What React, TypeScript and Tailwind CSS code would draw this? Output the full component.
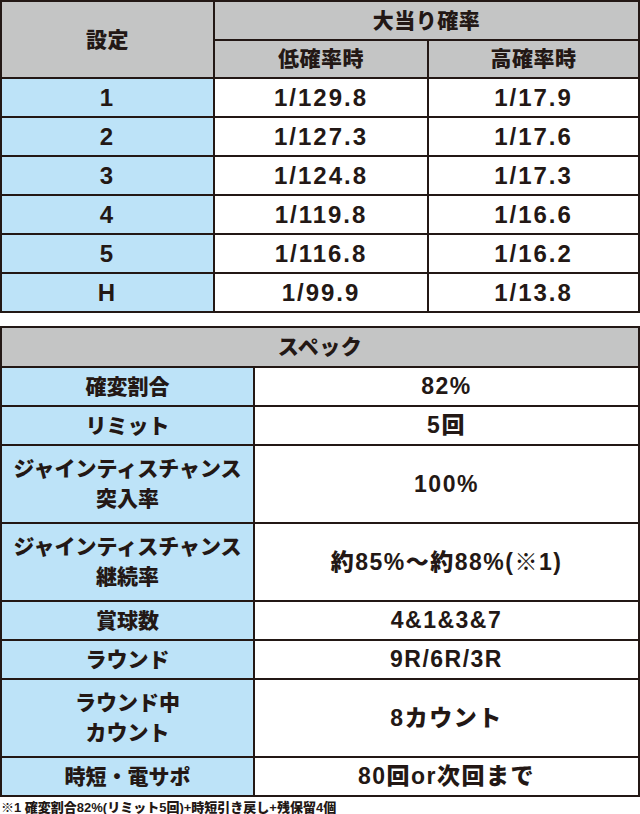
import React from "react";

const font = { fontFamily: '"Liberation Sans", "Noto Sans CJK JP", sans-serif' };

const probRows = [
  { setting: "1", low: "1/129.8", high: "1/17.9" },
  { setting: "2", low: "1/127.3", high: "1/17.6" },
  { setting: "3", low: "1/124.8", high: "1/17.3" },
  { setting: "4", low: "1/119.8", high: "1/16.6" },
  { setting: "5", low: "1/116.8", high: "1/16.2" },
  { setting: "H", low: "1/99.9", high: "1/13.8" },
];

const specRows: { label: string[]; value: string; tall?: boolean }[] = [
  { label: ["確変割合"], value: "82%" },
  { label: ["リミット"], value: "5回" },
  { label: ["ジャインティスチャンス", "突入率"], value: "100%", tall: true },
  { label: ["ジャインティスチャンス", "継続率"], value: "約85%～約88%(※1)", tall: true },
  { label: ["賞球数"], value: "4&1&3&7" },
  { label: ["ラウンド"], value: "9R/6R/3R" },
  { label: ["ラウンド中", "カウント"], value: "8カウント", tall: true },
  { label: ["時短・電サポ"], value: "80回or次回まで" },
];

const cell = "border-2 border-[#231815] text-center align-middle font-black text-[#231815]";
const head = `${cell} bg-[#c4c5c5] text-[21px] tracking-[0.5px]`;
const num = "text-[24px] tracking-[2px]";

export default function App() {
  return (
    <div className="w-[640px] bg-white" style={font}>
      <table className="w-full border-collapse table-fixed">
        <colgroup>
          <col className="w-[213px]" />
          <col className="w-[214px]" />
          <col />
        </colgroup>
        <thead>
          <tr className="h-[39px]">
            <th rowSpan={2} className={head}>
              設定
            </th>
            <th colSpan={2} className={head}>
              大当り確率
            </th>
          </tr>
          <tr className="h-[38px]">
            <th className={head}>低確率時</th>
            <th className={head}>高確率時</th>
          </tr>
        </thead>
        <tbody>
          {probRows.map((r) => (
            <tr key={r.setting} className="h-[39px]">
              <td className={`${cell} bg-[#bde3f8] ${num}`}>{r.setting}</td>
              <td className={`${cell} ${num}`}>{r.low}</td>
              <td className={`${cell} ${num}`}>{r.high}</td>
            </tr>
          ))}
        </tbody>
      </table>

      <table className="mt-[13px] w-full border-collapse table-fixed">
        <colgroup>
          <col className="w-[253px]" />
          <col />
        </colgroup>
        <thead>
          <tr className="h-[40px]">
            <th colSpan={2} className={head}>
              スペック
            </th>
          </tr>
        </thead>
        <tbody>
          {specRows.map((r, i) => (
            <tr key={i} className={r.tall ? "h-[78px]" : "h-[39px]"}>
              <td className={`${cell} bg-[#bde3f8] text-[21px] leading-[30px]`}>
                {r.label.map((l) => (
                  <div key={l}>{l}</div>
                ))}
              </td>
              <td className={`${cell} text-[23px] tracking-[1.5px]`}>{r.value}</td>
            </tr>
          ))}
        </tbody>
      </table>

      <p className="mt-[2px] text-[13px] font-black text-[#231815] leading-[18px] pl-[1px]">
        ※1 確変割合82%(リミット5回)+時短引き戻し+残保留4個
      </p>
    </div>
  );
}
